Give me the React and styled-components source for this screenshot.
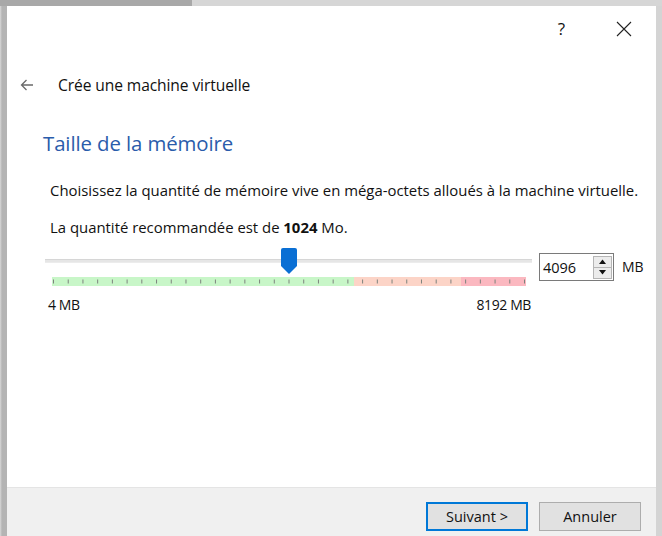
import React from "react";
import styled, { createGlobalStyle } from "styled-components";

const Global = createGlobalStyle`
  html, body { margin: 0; padding: 0; background: #fff; }
  body { font-family: "Open Sans", "Noto Sans", sans-serif; color: #111; }
  * { box-sizing: border-box; }
`;

const Frame = styled.div`
  width: 662px;
  height: 536px;
  display: flex;
  flex-direction: column;
  background: #c9c9c9;
  padding: 6px 6px 0 7px;
  background-image:
    linear-gradient(to right, #a8a8a8 0, #a8a8a8 192px, #d6d6d6 192px),
    linear-gradient(to right, #d9d9d9 0, #b4b4b4 2px, #b4b4b4 7px, transparent 7px),
    linear-gradient(to left, #d4d4d4 0, #d4d4d4 6px, transparent 6px);
  background-size: 100% 6px, 100% 100%, 100% 100%;
  background-repeat: no-repeat;
`;

const Window = styled.div`
  flex: 1;
  display: flex;
  flex-direction: column;
  background: #fff;
`;

const TitleBar = styled.div`
  height: 46px;
  display: flex;
  align-items: center;
  justify-content: flex-end;
  padding-right: 24px;
  gap: 51px;
`;

const Help = styled.span`
  font-size: 17px;
  line-height: 18px;
  color: #111;
`;

const Header = styled.div`
  height: 66px;
  display: flex;
  align-items: center;
  padding-left: 13px;
  gap: 24px;
`;

const HeaderText = styled.span`
  font-size: 15.6px;
  line-height: 20px;
  letter-spacing: -0.1px;
  color: #111;
`;

const Page = styled.div`
  flex: 1;
  display: flex;
  flex-direction: column;
  padding: 13px 0 0 36px;
`;

const Title = styled.h1`
  margin: 0;
  font-weight: 400;
  font-size: 20.4px;
  line-height: 24px;
  letter-spacing: -0.1px;
  color: #2a5cab;
`;

const Text = styled.p`
  margin: ${(p) => p.$mt}px 0 0 7px;
  font-size: 14.9px;
  line-height: 18px;
  color: #111;
  white-space: nowrap;
  b { font-weight: 700; }
`;

const SliderGrid = styled.div`
  margin-top: 10px;
  display: grid;
  grid-template-columns: 487px 75px auto;
  column-gap: 7px;
  align-items: start;
  padding-left: 2px;
`;

const SliderCol = styled.div`
  display: flex;
  flex-direction: column;
`;

const ThumbRow = styled.div`
  position: relative;
  height: 30px;
  display: flex;
  align-items: center;
`;

const Track = styled.div`
  width: 100%;
  height: 4px;
  background: #e6e6e6;
  border-top: 1px solid #d6d6d6;
  border-bottom: 1px solid #ececec;
`;

const Thumb = styled.svg`
  position: absolute;
  top: 2px;
`;

const Band = styled.svg`
  display: block;
  margin: 1px 0 0 7px;
`;

const Labels = styled.div`
  margin-top: 11px;
  display: flex;
  justify-content: space-between;
  padding: 0 1px 0 3px;
  font-size: 14px;
  line-height: 16px;
  letter-spacing: -0.4px;
  color: #111;
`;

const Spin = styled.div`
  margin-top: 7px;
  height: 28px;
  display: flex;
  align-items: center;
  border: 1px solid #7a7a7a;
  background: #fff;
  padding: 0 1px 0 3px;
`;

const SpinValue = styled.span`
  flex: 1;
  font-size: 14.5px;
  color: #111;
`;

const SpinButtons = styled.div`
  width: 19px;
  height: 23px;
  display: flex;
  flex-direction: column;
  border: 1px solid #b5b5b5;
  background: #ececec;
`;

const SpinButton = styled.div`
  flex: 1;
  display: flex;
  align-items: center;
  justify-content: center;
  & + & { border-top: 1px solid #b5b5b5; }
`;

const Unit = styled.span`
  margin-top: 12px;
  font-size: 14px;
  line-height: 18px;
  color: #111;
  padding-left: 1px;
`;

const Footer = styled.div`
  height: 49px;
  display: flex;
  justify-content: flex-end;
  align-items: flex-start;
  gap: 11px;
  padding: 14px 15px 0 0;
  background: #f0f0f0;
  border-top: 1px solid #e4e4e4;
`;

const Button = styled.button`
  width: 102px;
  height: 29px;
  font-family: inherit;
  font-size: 14.5px;
  color: #111;
  background: #e1e1e1;
  border: ${(p) => (p.$primary ? "2px solid #0078d7" : "1px solid #adadad")};
  padding: 0;
`;

const MIN = 4;
const MAX = 8192;
const VALUE = 4096;
const BAND_W = 474;

function TickBand() {
  const ticks = [];
  for (let i = 0; i <= 32; i++) {
    const x = 1.5 + (i * (BAND_W - 3)) / 32;
    ticks.push(<line key={i} x1={x} x2={x} y1={2.5} y2={6.5} stroke="#7d837d" strokeWidth="1" />);
  }
  return (
    <Band width={BAND_W} height={9} viewBox={`0 0 ${BAND_W} 9`}>
      <rect x="0" y="0" width="302" height="9" fill="#c8f6c8" />
      <rect x="302" y="0" width="107" height="9" fill="#fcd4c7" />
      <rect x="409" y="0" width={BAND_W - 409} height="9" fill="#fbb8c0" />
      {ticks}
    </Band>
  );
}

export default function App() {
  const thumbLeft = 8 + ((VALUE - MIN) / (MAX - MIN)) * (BAND_W - 3) - 7;
  return (
    <>
      <Global />
      <Frame>
        <Window>
          <TitleBar>
            <Help>?</Help>
            <svg width="16" height="16" viewBox="0 0 16 16">
              <path d="M1 1 L15 15 M15 1 L1 15" stroke="#222" strokeWidth="1.1" fill="none" />
            </svg>
          </TitleBar>
          <Header>
            <svg width="14" height="12" viewBox="0 0 14 12">
              <path d="M13 6 H1.5 M6.5 1 L1.5 6 L6.5 11" stroke="#6a6a6a" strokeWidth="1.3" fill="none" />
            </svg>
            <HeaderText>Crée une machine virtuelle</HeaderText>
          </Header>
          <Page>
            <Title>Taille de la mémoire</Title>
            <Text $mt={26}>
              Choisissez la quantité de mémoire vive en méga-octets alloués à la machine virtuelle.
            </Text>
            <Text $mt={19}>
              La quantité recommandée est de <b>1024</b> Mo.
            </Text>
            <SliderGrid>
              <SliderCol>
                <ThumbRow>
                  <Track />
                  <Thumb
                    width="16"
                    height="26"
                    viewBox="0 0 16 26"
                    style={{ left: `${thumbLeft}px` }}
                  >
                    <path d="M0 2 Q0 0 2 0 H14 Q16 0 16 2 V18 L8 26 L0 18 Z" fill="#0a6fd4" />
                  </Thumb>
                </ThumbRow>
                <TickBand />
                <Labels>
                  <span>4 MB</span>
                  <span>8192 MB</span>
                </Labels>
              </SliderCol>
              <Spin>
                <SpinValue>4096</SpinValue>
                <SpinButtons>
                  <SpinButton>
                    <svg width="7" height="5" viewBox="0 0 7 5"><path d="M0 5 L3.5 0.5 L7 5 Z" fill="#111" /></svg>
                  </SpinButton>
                  <SpinButton>
                    <svg width="7" height="5" viewBox="0 0 7 5"><path d="M0 0 L3.5 4.5 L7 0 Z" fill="#111" /></svg>
                  </SpinButton>
                </SpinButtons>
              </Spin>
              <Unit>MB</Unit>
            </SliderGrid>
          </Page>
          <Footer>
            <Button $primary>Suivant &gt;</Button>
            <Button>Annuler</Button>
          </Footer>
        </Window>
      </Frame>
    </>
  );
}
